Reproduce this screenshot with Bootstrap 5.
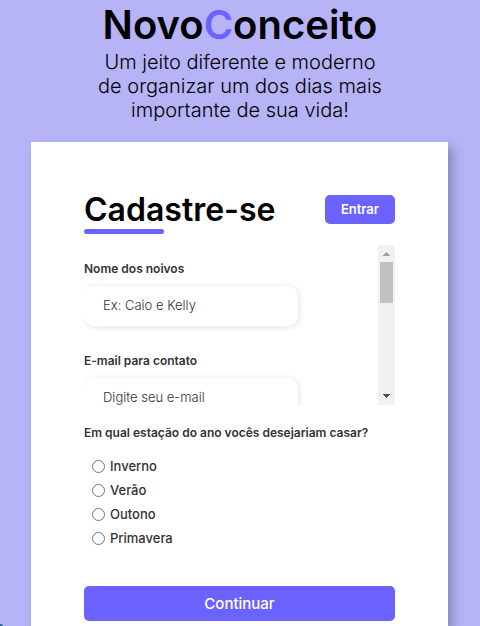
<!DOCTYPE html>
<html lang="pt-BR">
<head>
<meta charset="utf-8">
<meta name="viewport" content="width=device-width, initial-scale=1">
<title>NovoConceito</title>
<link href="https://cdn.jsdelivr.net/npm/bootstrap@5.3.0/dist/css/bootstrap.min.css" rel="stylesheet">
<style>
  :root { --brand: #6c63ff; }
  body { font-family: Inter, sans-serif; background: #b6b4f7; color: #000; }
  .page { height: 100vh; }
  .brand-title { font-size: 40px; line-height: 50px; font-weight: 600; }
  .brand-title span { color: var(--brand); }
  .tagline { font-size: 20px; line-height: 24px; font-weight: 300; max-width: 300px; }
  .panel { margin: 20px 32px 0 31px; padding: 48px 53px 5px; box-shadow: 5px 5px 10px rgba(0,0,0,.25); }
  .panel-title { font-size: 32px; line-height: 39px; font-weight: 600; }
  .panel-title::after { content: ""; display: block; width: 80px; height: 5px; border-radius: 5px; background: var(--brand); }
  .btn-brand { --bs-btn-color: #fff; --bs-btn-bg: var(--brand); --bs-btn-hover-color: #fff; --bs-btn-hover-bg: #5a52e0; --bs-btn-active-bg: #5a52e0; --bs-btn-border-radius: 5px; font-weight: 500; border: 0; }
  .btn-enter { font-size: 13px; line-height: 19px; font-weight: 600; padding: 5px 16px; margin-top: 5px; }
  .btn-next { font-size: 15px; line-height: 19px; padding: 8px; margin-top: 36px; }
  .fields-frame { height: 160px; margin-top: 11px; }
  .fields { overflow-y: auto; scrollbar-width: none; }
  .scroll-track { width: 17px; background: #f1f1f1; }
  .scroll-thumb { width: 13px; height: 41px; background: #c1c1c1; }
  .field-label { font-size: 12px; line-height: 16px; font-weight: 600; color: #333; margin-bottom: 9px; }
  .field { margin-top: 16px; margin-bottom: 27px; }
  .field .form-control { width: 214px; height: 40px; padding: 0 19px 2px; border: 0; border-radius: 10px; font-size: 13px; font-weight: 300; box-shadow: 1px 1px 6px rgba(0,0,0,.12); }
  .field .form-control::placeholder { color: #333; }
  .question { margin-bottom: 13px; }
  .season { font-size: 13px; line-height: 24px; font-weight: 500; color: #333; gap: 5px; }
  .season input { width: 13px; height: 13px; margin: 0; }
  .corner { left: 0; bottom: 0; }
</style>
</head>
<body>
<div class="page overflow-hidden position-relative">
  <header class="text-center">
    <h1 class="brand-title m-0">Novo<span>C</span>onceito</h1>
    <p class="tagline mx-auto mb-0">Um jeito diferente e moderno de organizar um dos dias mais importante de sua vida!</p>
  </header>
  <main class="panel bg-white">
    <div class="d-flex justify-content-between align-items-start">
      <h2 class="panel-title m-0">Cadastre-se</h2>
      <button type="button" class="btn btn-brand btn-enter">Entrar</button>
    </div>
    <form>
      <div class="fields-frame d-flex">
        <div class="fields flex-grow-1">
          <div class="field">
            <label class="field-label d-block" for="nome">Nome dos noivos</label>
            <input class="form-control" id="nome" type="text" placeholder="Ex: Caio e Kelly">
          </div>
          <div class="field">
            <label class="field-label d-block" for="email">E-mail para contato</label>
            <input class="form-control" id="email" type="email" placeholder="Digite seu e-mail">
          </div>
        </div>
        <div class="scroll-track d-flex flex-column align-items-center" aria-hidden="true">
          <svg width="17" height="17" shape-rendering="crispEdges"><path d="M8 7h1v1h1v1h1v1h1v1H5v-1h1V9h1V8h1z" fill="#a3a3a3"/></svg>
          <div class="scroll-thumb"></div>
          <svg class="mt-auto" width="17" height="17" shape-rendering="crispEdges"><path d="M5 6h7v1h-1v1h-1v1H9v1H8V9H7V8H6V7H5z" fill="#505050"/></svg>
        </div>
      </div>
      <fieldset class="mt-3 pt-1">
        <legend class="field-label question">Em qual estação do ano vocês desejariam casar?</legend>
        <div class="season d-flex align-items-center ps-2"><input type="radio" name="estacao" id="inverno"><label for="inverno">Inverno</label></div>
        <div class="season d-flex align-items-center ps-2"><input type="radio" name="estacao" id="verao"><label for="verao">Verão</label></div>
        <div class="season d-flex align-items-center ps-2"><input type="radio" name="estacao" id="outono"><label for="outono">Outono</label></div>
        <div class="season d-flex align-items-center ps-2"><input type="radio" name="estacao" id="primavera"><label for="primavera">Primavera</label></div>
      </fieldset>
      <button type="submit" class="btn btn-brand btn-next w-100">Continuar</button>
    </form>
  </main>
  <svg class="corner position-absolute" width="3" height="2" aria-hidden="true"><path d="M0 0h1l2 1v1H0z" fill="#2f6290"/></svg>
</div>
<script src="https://cdn.jsdelivr.net/npm/bootstrap@5.3.0/dist/js/bootstrap.bundle.min.js"></script>
</body>
</html>
